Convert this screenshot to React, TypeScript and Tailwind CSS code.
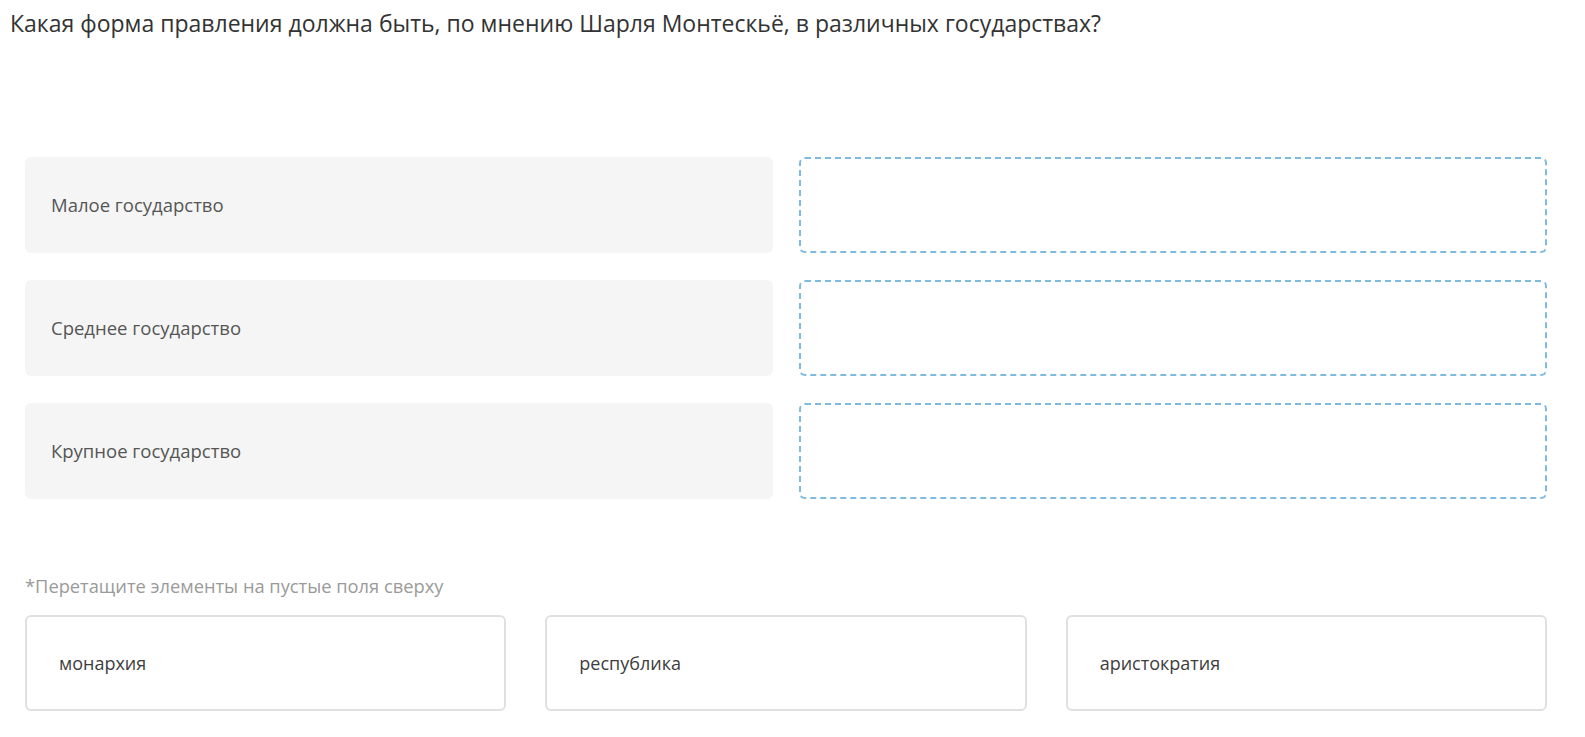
import React from 'react';

const rows = ['Малое государство', 'Среднее государство', 'Крупное государство'];
const options = ['монархия', 'республика', 'аристократия'];

const App: React.FC = () => {
    return (
        <div className="min-h-screen bg-white pt-[10px] font-['Open_Sans','Noto_Sans',sans-serif]">
            <h1 className="px-[10px] text-[23px] leading-[26px] text-[#333333]">
                Какая форма правления должна быть, по мнению Шарля Монтескьё, в различных государствах?
            </h1>

            <div className="pl-[25px] pr-[38px]">
                {/* пары: утверждение слева, пустое поле справа */}
                <div className="mt-[121px] grid grid-cols-2 gap-x-[26px] gap-y-[27px]">
                    {rows.map((label) => (
                        <React.Fragment key={label}>
                            <div className="flex h-[96px] items-center rounded-md bg-[#f5f5f5] pl-[26px] text-[18.5px] text-[#555555]">
                                {label}
                            </div>
                            <div className="h-[96px] rounded-md border-2 border-dashed border-[#7dbbe0]" />
                        </React.Fragment>
                    ))}
                </div>

                <p className="mt-[76px] text-[18.3px] leading-[22px] text-[#9a9a9a]">
                    *Перетащите элементы на пустые поля сверху
                </p>

                <div className="mt-[18px] grid grid-cols-3 gap-x-[39px]">
                    {options.map((opt) => (
                        <div
                            key={opt}
                            className="flex h-[96px] items-center rounded-md border-2 border-[#e0e0e0] bg-white pl-[32px] text-[18px] text-[#3d3d3d]"
                        >
                            {opt}
                        </div>
                    ))}
                </div>
            </div>
        </div>
    );
};

export default App;
